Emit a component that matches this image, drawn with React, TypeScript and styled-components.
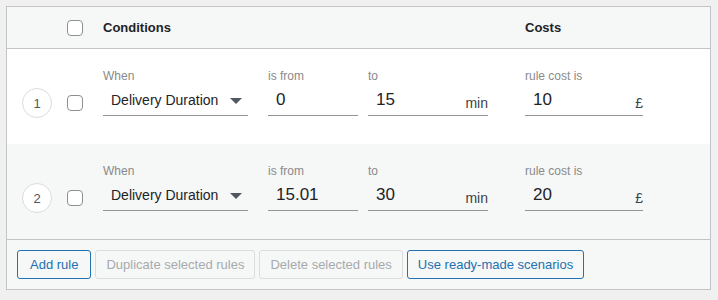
import styled, { createGlobalStyle } from 'styled-components';

const GlobalStyle = createGlobalStyle`
  html, body {
    margin: 0;
    padding: 0;
    background: #f0f0f1;
  }
  body {
    font-family: 'Liberation Sans', Arial, sans-serif;
    color: #1d2327;
  }
`;

const Table = styled.div`
  margin: 6px 7px 0 6px;
  border: 1px solid #c3c4c7;
  background: #fff;
`;

const Header = styled.div`
  display: flex;
  align-items: center;
  height: 41px;
  background: #f6f7f7;
  border-bottom: 1px solid #c3c4c7;
  font-weight: 700;
  font-size: 13px;
  color: #1d2327;
`;

const HeaderCell = styled.div<{ $width?: number }>`
  width: ${(p) => (p.$width ? `${p.$width}px` : 'auto')};
  flex: ${(p) => (p.$width ? 'none' : '1')};
  display: flex;
`;

const Row = styled.div<{ $alt?: boolean }>`
  display: flex;
  align-items: flex-end;
  padding: 20px 0 28px 15px;
  background: ${(p) => (p.$alt ? '#f6f7f7' : '#fff')};
`;

const Index = styled.div`
  width: 30px;
  height: 30px;
  box-sizing: border-box;
  border: 1px solid #dcdcde;
  border-radius: 50%;
  display: flex;
  align-items: center;
  justify-content: center;
  font-size: 13px;
  color: #50575e;
  margin-bottom: -2px;
  background: #fff;
`;

const Checkbox = styled.span<{ $bottom?: number }>`
  display: inline-block;
  width: 16px;
  height: 16px;
  box-sizing: border-box;
  border: 1px solid #8c8f94;
  border-radius: 4px;
  background: #fff;
  margin-bottom: ${(p) => p.$bottom ?? 0}px;
`;

const CheckCell = styled.div`
  width: 16px;
  margin-left: 15px;
  display: flex;
`;

const Fields = styled.div`
  display: flex;
  align-items: flex-end;
  margin-left: 20px;
`;

const Field = styled.div<{ $width: number; $gap?: number }>`
  width: ${(p) => p.$width}px;
  margin-right: ${(p) => p.$gap ?? 0}px;
  display: flex;
  flex-direction: column;
`;

const Label = styled.div`
  font-size: 12px;
  line-height: 14px;
  color: #8a8a8a;
`;

const Input = styled.div`
  height: 32px;
  border-bottom: 1px solid #949494;
  display: flex;
  align-items: center;
  padding: 0 0 0 8px;
`;

const Value = styled.span<{ $size?: number }>`
  flex: 1;
  font-size: ${(p) => p.$size ?? 17}px;
  color: #1d2327;
  margin-top: 2px;
`;

const Unit = styled.span`
  font-size: 14px;
  color: #3c434a;
  margin-top: 7px;
`;

const Caret = styled.span`
  width: 0;
  height: 0;
  border-left: 6px solid transparent;
  border-right: 6px solid transparent;
  border-top: 6px solid #50575e;
  margin-right: 6px;
  margin-top: 3px;
`;

const Footer = styled.div`
  display: flex;
  gap: 4px;
  padding: 10px;
  background: #f6f7f7;
  border-top: 1px solid #c3c4c7;
`;

const Button = styled.button<{ $disabled?: boolean; $pad?: number }>`
  height: 29px;
  padding: 0 ${(p) => p.$pad ?? 10}px;
  box-sizing: border-box;
  font-family: 'Liberation Sans', Arial, sans-serif;
  font-size: 13px;
  border-radius: 3px;
  border: 1px solid ${(p) => (p.$disabled ? '#dcdcde' : '#2271b1')};
  color: ${(p) => (p.$disabled ? '#a7aaad' : '#2271b1')};
  background: #f6f7f7;
  cursor: ${(p) => (p.$disabled ? 'default' : 'pointer')};
`;

type Rule = { id: number; from: string; to: string; cost: string };

const rules: Rule[] = [
  { id: 1, from: '0', to: '15', cost: '10' },
  { id: 2, from: '15.01', to: '30', cost: '20' },
];

export default function App() {
  return (
    <>
      <GlobalStyle />
      <Table>
        <Header>
          <HeaderCell $width={60} />
          <HeaderCell $width={36}>
            <Checkbox />
          </HeaderCell>
          <HeaderCell $width={422}>Conditions</HeaderCell>
          <HeaderCell>Costs</HeaderCell>
        </Header>
        {rules.map((r) => (
          <Row key={r.id} $alt={r.id % 2 === 0}>
            <Index>{r.id}</Index>
            <CheckCell>
              <Checkbox $bottom={5} />
            </CheckCell>
            <Fields>
              <Field $width={145} $gap={20}>
                <Label>When</Label>
                <Input>
                  <Value $size={14}>Delivery Duration</Value>
                  <Caret />
                </Input>
              </Field>
              <Field $width={90} $gap={10}>
                <Label>is from</Label>
                <Input>
                  <Value>{r.from}</Value>
                </Input>
              </Field>
              <Field $width={120} $gap={37}>
                <Label>to</Label>
                <Input>
                  <Value>{r.to}</Value>
                  <Unit>min</Unit>
                </Input>
              </Field>
              <Field $width={118}>
                <Label>rule cost is</Label>
                <Input>
                  <Value>{r.cost}</Value>
                  <Unit>£</Unit>
                </Input>
              </Field>
            </Fields>
          </Row>
        ))}
        <Footer>
          <Button $pad={12}>Add rule</Button>
          <Button $disabled>Duplicate selected rules</Button>
          <Button $disabled>Delete selected rules</Button>
          <Button>Use ready-made scenarios</Button>
        </Footer>
      </Table>
    </>
  );
}
